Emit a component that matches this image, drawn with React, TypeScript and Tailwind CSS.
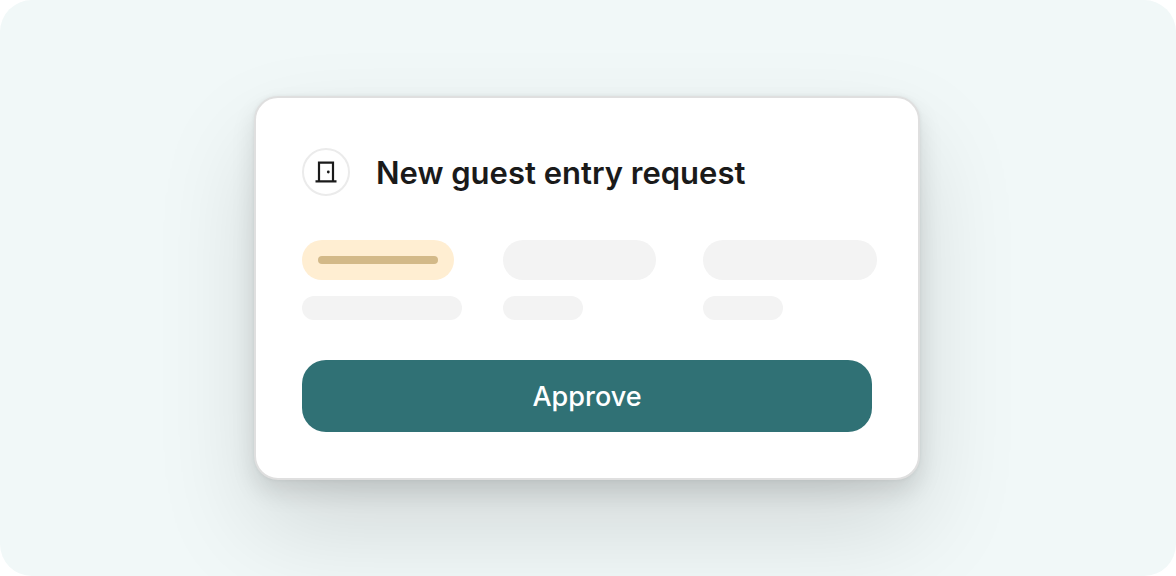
import { type ReactNode } from "react";

type BarProps = {
  className: string;
  children?: ReactNode;
};

function Bar({ className, children }: BarProps) {
  return <div className={`rounded-full ${className}`}>{children}</div>;
}

function DoorIcon() {
  return (
    <svg
      viewBox="0 0 24 24"
      className="h-6 w-6"
      fill="none"
      stroke="currentColor"
      strokeWidth="2.2"
      aria-hidden="true"
    >
      <path d="M1.5 21.3h21M5 21V2.7h14V21" />
      <circle cx="14.3" cy="12" r="1.4" fill="currentColor" stroke="none" />
    </svg>
  );
}

export default function App() {
  return (
    <main className="flex min-h-screen items-center justify-center overflow-hidden rounded-[32px] bg-[#f1f8f8] pl-4 pr-[18px] font-['Inter',sans-serif]">
      <section className="w-full max-w-[666px] rounded-3xl border-2 border-[#dfdfdf] bg-white p-[46px] shadow-[0_0_4px_rgba(0,0,0,0.06),0_12px_24px_rgba(0,0,0,0.11),0_48px_100px_rgba(0,0,0,0.13)]">
        <header className="flex h-14 items-center gap-[26px]">
          <div className="flex h-12 w-12 shrink-0 items-center justify-center rounded-full border-2 border-[#ebebeb] text-[#1a1a1a]">
            <DoorIcon />
          </div>
          <h1 className="pt-0.5 text-[31px] leading-10 font-semibold text-[#1a1a1a]">
            New guest entry request
          </h1>
        </header>

        <div className="mt-10 grid grid-cols-3 gap-8">
          <div className="flex flex-col gap-4">
            <Bar className="flex h-10 w-[152px] items-center bg-[#ffeed2] px-4">
              <Bar className="h-2 w-full bg-[#d3b988]" />
            </Bar>
            <Bar className="h-6 w-40 bg-[#f3f3f3]" />
          </div>
          <div className="flex flex-col gap-4">
            <Bar className="h-10 w-[153px] bg-[#f3f3f3]" />
            <Bar className="h-6 w-20 bg-[#f3f3f3]" />
          </div>
          <div className="flex flex-col gap-4">
            <Bar className="h-10 w-[174px] bg-[#f3f3f3]" />
            <Bar className="h-6 w-20 bg-[#f3f3f3]" />
          </div>
        </div>

        <button
          type="button"
          className="mt-10 h-[72px] w-full rounded-3xl bg-[#307175] pt-0.5 text-[27px] font-medium text-white"
        >
          Approve
        </button>
      </section>
    </main>
  );
}
